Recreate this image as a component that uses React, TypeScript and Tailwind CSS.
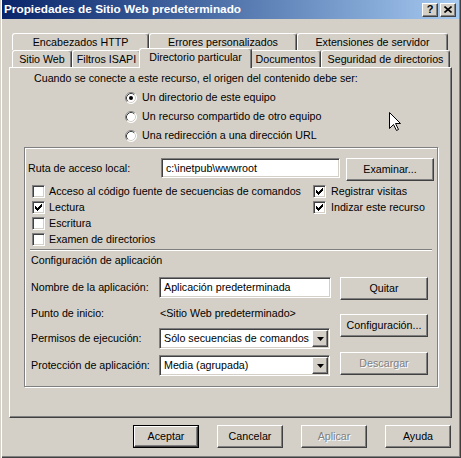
import React from "react";

const raised =
  "border border-t-white border-l-white border-r-[#404040] border-b-[#404040] shadow-[inset_-1px_-1px_0_#808080]";
const sunken =
  "border border-t-[#808080] border-l-[#808080] border-r-white border-b-white shadow-[inset_1px_1px_0_#404040,inset_-1px_-1px_0_#d4d0c8]";
const disabledText = "text-[#808080] [text-shadow:1px_1px_0_#fff]";

interface BtnProps {
  label: string;
  w: string;
  disabled?: boolean;
  isDefault?: boolean;
}

const Btn = ({ label, w, disabled, isDefault }: BtnProps) => {
  const face = (
    <div
      className={`flex h-full w-full items-center justify-center bg-[#d4d0c8] ${raised} ${
        disabled ? disabledText : "text-black"
      }`}
    >
      {label}
    </div>
  );
  if (isDefault) {
    return <div className={`${w} h-[23px] shrink-0 border border-black`}>{face}</div>;
  }
  return <div className={`${w} h-[23px] shrink-0`}>{face}</div>;
};

const Tab = ({ label, w, active }: { label: string; w: string; active?: boolean }) => (
  <div
    className={`${w} flex shrink-0 items-center justify-center rounded-t-[3px] border-t border-l border-r border-t-white border-l-white border-r-[#404040] bg-[#d4d0c8] shadow-[inset_-1px_0_0_#808080] ${
      active ? "relative z-10 -mx-[2px] -mt-[2px] h-[20px] pb-[3px]" : "h-full"
    }`}
  >
    {label}
  </div>
);

const CheckMark = () => (
  <svg width="9" height="9" viewBox="0 0 9 9">
    {[
      [1, 3],
      [2, 4],
      [3, 5],
      [4, 4],
      [5, 3],
      [6, 2],
      [7, 1],
    ].map(([x, y]) => (
      <rect key={x} x={x} y={y} width="1" height="3" fill="#000" />
    ))}
  </svg>
);

const Check = ({ label, checked, gap }: { label: string; checked?: boolean; gap: string }) => (
  <div className={`flex h-[16px] items-center ${gap}`}>
    <div className={`flex h-[13px] w-[13px] shrink-0 items-center justify-center bg-white ${sunken}`}>
      {checked && <CheckMark />}
    </div>
    <span className="whitespace-nowrap">{label}</span>
  </div>
);

const Radio = ({ label, checked }: { label: string; checked?: boolean }) => (
  <div className="flex h-[19px] items-center gap-[5px]">
    <svg width="12" height="12" viewBox="0 0 12 12" className="shrink-0">
      <circle cx="6" cy="6" r="5.5" fill="#fff" />
      <path d="M2.11 9.89 A5.5 5.5 0 0 1 9.89 2.11" fill="none" stroke="#808080" />
      <path d="M9.89 2.11 A5.5 5.5 0 0 1 2.11 9.89" fill="none" stroke="#fff" />
      <path d="M2.82 9.18 A4.5 4.5 0 0 1 9.18 2.82" fill="none" stroke="#404040" />
      <path d="M9.18 2.82 A4.5 4.5 0 0 1 2.82 9.18" fill="none" stroke="#d4d0c8" />
      {checked && <circle cx="6" cy="6" r="2" fill="#000" />}
    </svg>
    <span className="whitespace-nowrap">{label}</span>
  </div>
);

const TextBox = ({ value, w, h }: { value: string; w: string; h: string }) => (
  <div className={`${w} ${h} flex shrink-0 items-center bg-white pl-[4px] ${sunken}`}>
    <span className="whitespace-nowrap">{value}</span>
  </div>
);

const Combo = ({ value }: { value: string }) => (
  <div className={`flex h-[21px] w-[171px] shrink-0 bg-white p-[1px] ${sunken}`}>
    <div className="flex flex-1 items-center overflow-hidden pl-[3px] whitespace-nowrap">{value}</div>
    <div className={`flex w-[16px] items-center justify-center bg-[#d4d0c8] ${raised}`}>
      <svg width="7" height="4" viewBox="0 0 7 4">
        <path d="M0 0 H7 L3.5 4 Z" fill="#000" />
      </svg>
    </div>
  </div>
);

const CaptionBtn = ({ children }: { children: React.ReactNode }) => (
  <div
    className={`flex h-[14px] w-[16px] items-center justify-center bg-[#d4d0c8] text-[11px] font-bold text-black ${raised}`}
  >
    {children}
  </div>
);

const App = () => {
  return (
    <div className="relative h-[458px] w-[461px] overflow-hidden bg-[#d4d0c8] font-['Liberation_Sans',Arial,sans-serif] text-[10.7px] leading-[13px] text-black shadow-[inset_1px_0_0_#d4d0c8,inset_2px_0_0_#fff,inset_-1px_-1px_0_#404040,inset_-2px_-2px_0_#808080]">
      {/* title bar */}
      <div className="mx-[2px] flex h-[19px] items-center justify-between bg-linear-to-r from-[#0a246a] to-[#a6caf0] pl-[2px] pr-[3px]">
        <span className="text-[11.8px] font-bold whitespace-nowrap text-white">
          Propiedades de Sitio Web predeterminado
        </span>
        <div className="flex gap-[2px]">
          <CaptionBtn>?</CaptionBtn>
          <CaptionBtn>
            <svg width="8" height="7" viewBox="0 0 8 7">
              <path d="M0.5 0.5 L7.5 6.5 M7.5 0.5 L0.5 6.5" stroke="#000" strokeWidth="1.6" />
            </svg>
          </CaptionBtn>
        </div>
      </div>

      <div className="ml-[9px] mt-[12px] w-[443px]">
        {/* tabs */}
        <div className="ml-[3px] flex h-[19px] pt-[2px]">
          <Tab label="Encabezados HTTP" w="w-[137px]" />
          <Tab label="Errores personalizados" w="w-[148px]" />
          <Tab label="Extensiones de servidor" w="w-[151px]" />
        </div>
        <div className="ml-[3px] flex h-[17px]">
          <Tab label="Sitio Web" w="w-[60px]" />
          <Tab label="Filtros ISAPI" w="w-[69px]" />
          <Tab label="Directorio particular" w="w-[113px]" active />
          <Tab label="Documentos" w="w-[71px]" />
          <Tab label="Seguridad de directorios" w="w-[129px]" />
        </div>

        {/* page */}
        <div className="h-[351px] border border-t-white border-l-white border-r-[#404040] border-b-[#404040] shadow-[inset_-1px_-1px_0_#808080]">
          <p className="ml-[24px] mt-[4px] whitespace-nowrap">
            Cuando se conecte a este recurso, el origen del contenido debe ser:
          </p>
          <div className="ml-[115px] mt-[3px]">
            <Radio label="Un directorio de este equipo" checked />
            <Radio label="Un recurso compartido de otro equipo" />
            <Radio label="Una redirección a una dirección URL" />
          </div>

          <div className="ml-[14px] mt-[2px] h-[240px] w-[414px] border border-[#808080] shadow-[inset_1px_1px_0_#fff,1px_1px_0_#fff]">
            <div className="mt-[10px] flex items-start">
              <div className="ml-[3px] flex h-[20px] w-[133px] items-center">Ruta de acceso local:</div>
              <TextBox value="c:\inetpub\wwwroot" w="w-[179px]" h="h-[20px]" />
              <div className="ml-[6px]">
                <Btn label="Examinar..." w="w-[88px]" />
              </div>
            </div>

            <div className="mt-[2px] flex">
              <div className="ml-[7px] w-[281px]">
                <Check label="Acceso al código fuente de secuencias de comandos" gap="gap-[4px]" />
                <Check label="Lectura" checked gap="gap-[4px]" />
                <Check label="Escritura" gap="gap-[4px]" />
                <Check label="Examen de directorios" gap="gap-[4px]" />
              </div>
              <div>
                <Check label="Registrar visitas" checked gap="gap-[5px]" />
                <Check label="Indizar este recurso" checked gap="gap-[5px]" />
              </div>
            </div>

            <div className="ml-[5px] mt-[2px] h-[2px] w-[402px] border-t border-b border-t-[#808080] border-b-white" />

            <p className="ml-[6px] mt-[3px]">Configuración de aplicación</p>

            <div className="mt-[10px] flex">
              <div className="ml-[6px] w-[300px]">
                <div className="flex h-[21px] items-center">
                  <span className="w-[128px] shrink-0">Nombre de la aplicación:</span>
                  <TextBox value="Aplicación predeterminada" w="w-[172px]" h="h-[21px]" />
                </div>
                <div className="mt-[5px] flex h-[21px] items-center">
                  <span className="w-[129px] shrink-0">Punto de inicio:</span>
                  <span className="whitespace-nowrap">&lt;Sitio Web predeterminado&gt;</span>
                </div>
                <div className="mt-[4px] flex h-[21px] items-center">
                  <span className="w-[128px] shrink-0">Permisos de ejecución:</span>
                  <Combo value="Sólo secuencias de comandos" />
                </div>
                <div className="mt-[6px] flex h-[21px] items-center">
                  <span className="w-[128px] shrink-0">Protección de aplicación:</span>
                  <Combo value="Media (agrupada)" />
                </div>
              </div>
              <div className="ml-[9px] flex flex-col">
                <Btn label="Quitar" w="w-[88px]" />
                <div className="mt-[14px]">
                  <Btn label="Configuración..." w="w-[88px]" />
                </div>
                <div className="mt-[15px]">
                  <Btn label="Descargar" w="w-[88px]" disabled />
                </div>
              </div>
            </div>
          </div>
        </div>
      </div>

      {/* dialog buttons */}
      <div className="mt-[7px] flex justify-end gap-[18px] pr-[10px]">
        <Btn label="Aceptar" w="w-[66px]" isDefault />
        <Btn label="Cancelar" w="w-[66px]" />
        <Btn label="Aplicar" w="w-[66px]" disabled />
        <Btn label="Ayuda" w="w-[66px]" />
      </div>

      {/* mouse pointer */}
      <svg className="absolute left-[389px] top-[112px]" width="13" height="20" viewBox="0 0 13 20">
        <path
          d="M0.5 0.5 L0.5 16.5 L4.5 12.5 L7.5 18.5 L9.5 17.5 L6.5 11.5 L11.5 11.5 Z"
          fill="#fff"
          stroke="#000"
        />
      </svg>
    </div>
  );
};

export default App;
